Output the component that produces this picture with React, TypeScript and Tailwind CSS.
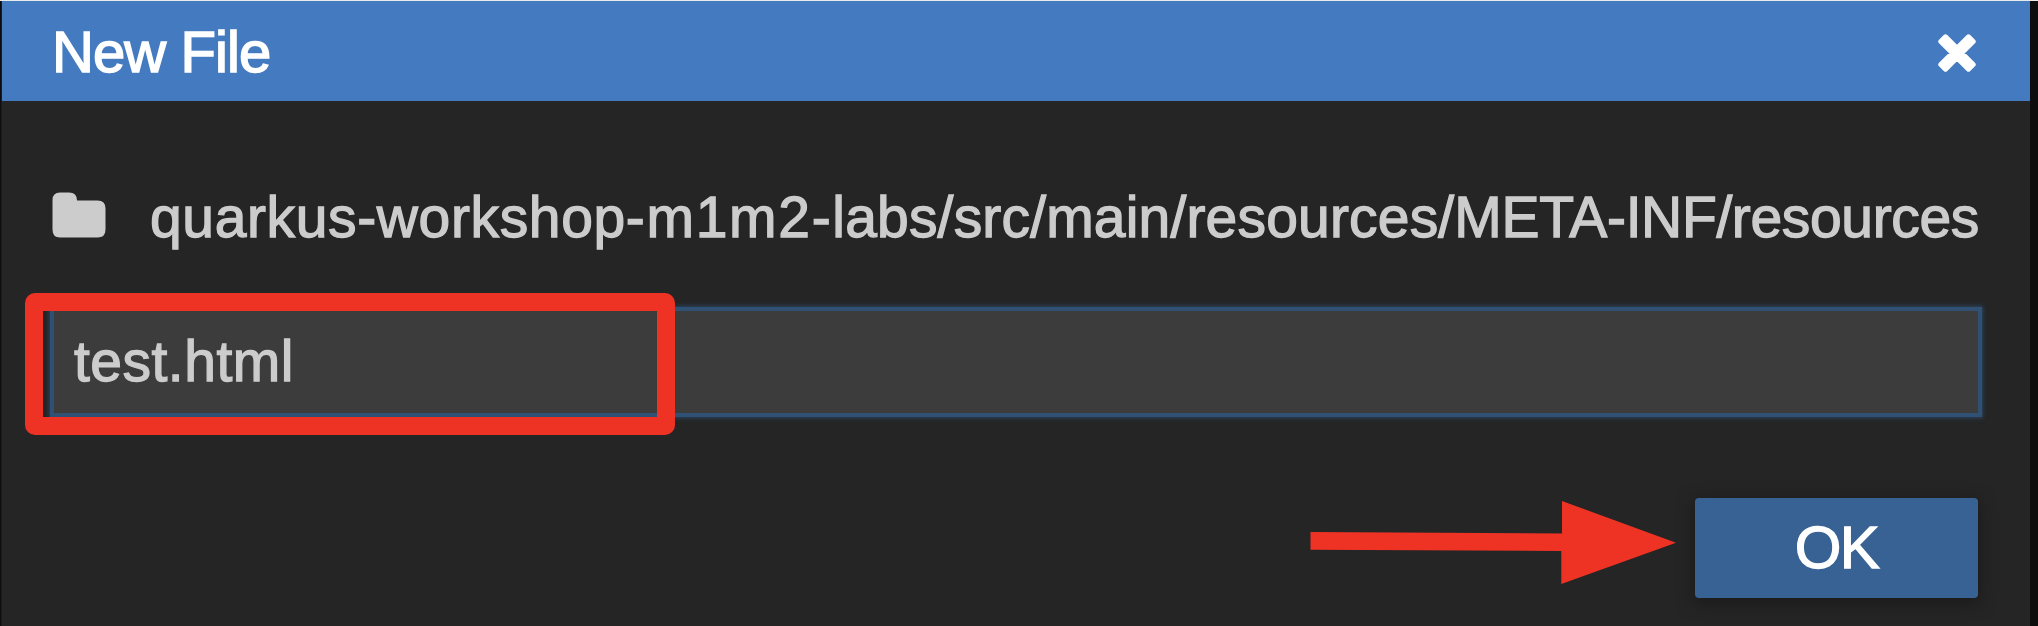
import React from "react";

function FolderIcon() {
  return (
    <svg className="mb-[3px] h-[46px] w-[54px] shrink-0" viewBox="0 0 54 46" fill="#cccccc">
      <path d="M8 0.5H17Q25 0.5 25 8.5H45.5Q53.5 8.5 53.5 16.5V37.5Q53.5 45.5 45.5 45.5H8Q0.5 45.5 0.5 37.5V8Q0.5 0.5 8 0.5Z" />
    </svg>
  );
}

function CloseIcon() {
  return (
    <svg className="mt-[3px] h-[38px] w-[38px]" viewBox="0 0 38 38" fill="#ffffff">
      <path
        strokeWidth="5"
        strokeLinejoin="round"
        stroke="#ffffff"
        d="M2.8 7.5 7.5 2.8 19 14.3 30.5 2.8 35.2 7.5 23.7 19 35.2 30.5 30.5 35.2 19 23.7 7.5 35.2 2.8 30.5 14.3 19Z"
      />
    </svg>
  );
}

function Arrow() {
  return (
    <svg className="mt-[3px] h-[84px] w-[366px] shrink-0" viewBox="0 0 366 84" fill="#ee3324">
      <path d="M0.5 31 252 32.5V0L366 41.8 251.3 83V50L0.5 48.7Z" />
    </svg>
  );
}

export default function App() {
  return (
    <div className="h-[626px] w-[2038px] overflow-hidden border-t border-[#e8eaec] bg-[#0d0d0d] pr-[8px] pl-[1px] font-['Liberation_Sans',Arial,sans-serif] font-normal">
      <div className="flex h-[625px] flex-col border-l border-[#1b1b1b] bg-[#252525]">
        <header className="flex h-[100px] shrink-0 items-center justify-between bg-[#447bc0] pr-[54px] pl-[50px]">
          <h1 className="pt-[2px] text-[58px] leading-[98px] tracking-[-0.9px] whitespace-nowrap text-white [-webkit-text-stroke:1.5px_#ffffff]">
            New File
          </h1>
          <CloseIcon />
        </header>
        <main className="flex flex-col pr-[47px] pl-[50px]">
          <div className="mt-[81px] flex h-[68px] items-center">
            <FolderIcon />
            <span className="mt-[1px] ml-[44px] text-[57px] leading-[68px] whitespace-nowrap text-[#cccccc] [-webkit-text-stroke:1.3px_#cccccc]">
              <span className="tracking-[0.63px]">quarkus-workshop</span>
              <span className="tracking-[1.7px]">-m1m2-</span>
              <span className="tracking-[0.18px]">labs/src/main/resources/</span>
              <span className="tracking-[-0.36px]">META-INF/resources</span>
            </span>
          </div>
          <div className="relative mt-[57px] mr-[1px] ml-[-2px] h-[110px] border-4 border-[#315174] bg-[#3c3c3c] pl-[20px] shadow-[0_0_4px_1px_#2b4665]">
            <span className="text-[57px] leading-[100px] tracking-[0.5px] text-[#cccccc] [-webkit-text-stroke:1.3px_#cccccc]">test.html</span>
            <div className="absolute top-[-18px] left-[-29px] h-[142px] w-[650px] rounded-[10px] bg-[#ee3324] [clip-path:path(evenodd,'M0_0H650V142H0ZM18_18V124H632V18Z')]" />
          </div>
          <div className="mt-[81px] mr-[5px] flex h-[100px] justify-end">
            <Arrow />
            <button className="ml-[19px] h-[100px] w-[283px] shrink-0 rounded-[4px] bg-[#386294] text-[60px] leading-[96px] tracking-[-1.5px] text-white shadow-[0_4px_16px_2px_#1b1b1b] [-webkit-text-stroke:1.3px_#ffffff]">
              OK
            </button>
          </div>
        </main>
      </div>
    </div>
  );
}
